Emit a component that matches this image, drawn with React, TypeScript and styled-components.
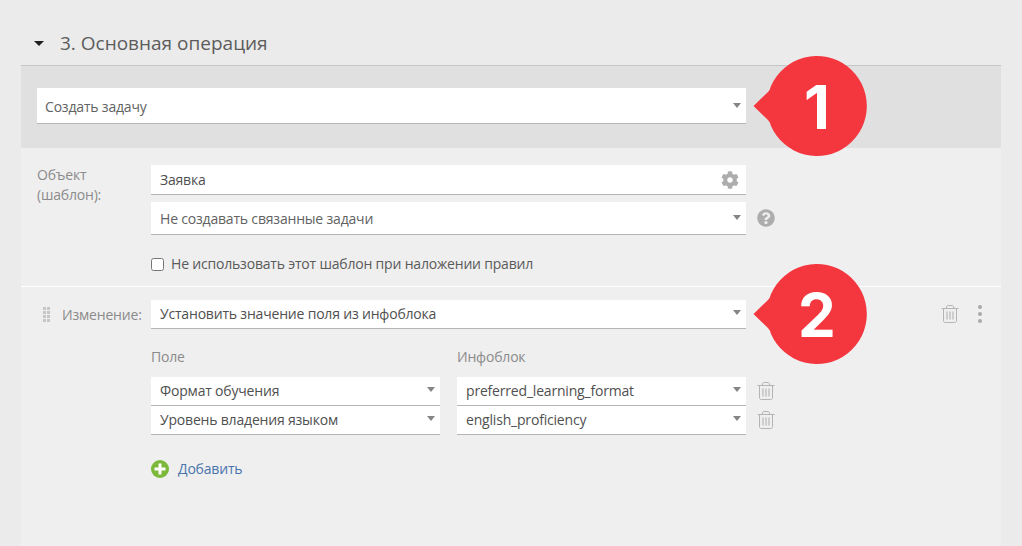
import React from 'react';
import styled, { createGlobalStyle } from 'styled-components';
import { FaCog, FaQuestionCircle } from 'react-icons/fa';

const GlobalStyle = createGlobalStyle`
  html, body {
    margin: 0;
    height: 546px;
    overflow: hidden;
    background: #ebebeb;
    font-family: "Open Sans", "Noto Sans", sans-serif;
  }
  * { box-sizing: border-box; }
`;

const TrashIcon = ({ size = 18 }: { size?: number }) => (
  <svg width={size} height={size} viewBox="0 0 18 18" fill="none" stroke="#b4b4b4" strokeWidth="1">
    <path d="M0.5 3.5h17M5.5 3.5V2C5.5 1 6.2.5 7 .5h4c.8 0 1.5.5 1.5 1.5v1.5" />
    <path d="M2.5 3.5v12.3c0 1 .7 1.7 1.7 1.7h9.6c1 0 1.7-.7 1.7-1.7V3.5" />
    <path d="M6 6.5v8M9 6.5v8M12 6.5v8" strokeWidth="1.6" stroke="#c6c6c6" />
  </svg>
);

const PlusIcon = () => (
  <svg width="18" height="18" viewBox="0 0 18 18">
    <circle cx="9" cy="9" r="9" fill="#7cb83a" />
    <path d="M9 3.5v11M3.5 9h11" stroke="#fff" strokeWidth="3" />
  </svg>
);

const BubbleShape = () => (
  <svg width="114" height="100" viewBox="0 0 114 100">
    <path
      d="M0.5 50 L15 36 Q17 34 18 30 A50 50 0 1 1 18 70 Q17 66 15 64 Z"
      fill="#f4373f"
    />
  </svg>
);

const Callout = ({ top, children }: { top: number; children: React.ReactNode }) => (
  <Bubble $top={top}>
    <BubbleShape />
    <BubbleNumber>{children}</BubbleNumber>
  </Bubble>
);

const Select = ({
  children,
  height = 29,
  lift = 1,
  inset = 9,
  nudge = -1,
}: {
  children: React.ReactNode;
  height?: number;
  lift?: number;
  inset?: number;
  nudge?: number;
}) => (
  <Field $height={height} $inset={inset} $nudge={nudge}>
    <FieldText>{children}</FieldText>
    <Caret $lift={lift} />
  </Field>
);

const App = () => (
  <Page>
    <GlobalStyle />
    <Panel>
      <Header>
        <HeaderCaret />
        <Title>3. Основная операция</Title>
      </Header>
      <TopBand>
        <Select height={36} lift={1} inset={8} nudge={1}>
          <MutedValue>Создать задачу</MutedValue>
        </Select>
      </TopBand>
      <ObjectSection>
        <FormRow>
          <RowLabel>
            Объект
            <br />
            (шаблон):
          </RowLabel>
          <Stack>
            <Field $height={30} $inset={9} $nudge={0}>
              <FieldText>Заявка</FieldText>
              <GearWrap>
                <FaCog size={18} color="#adadad" />
              </GearWrap>
            </Field>
            <HelpRow>
              <Select height={33} lift={1} nudge={0}>
                <MutedValue>Не создавать связанные задачи</MutedValue>
              </Select>
              <HelpIcon>
                <FaQuestionCircle size={18} color="#adadad" />
              </HelpIcon>
            </HelpRow>
            <CheckRow>
              <CheckBox type="checkbox" readOnly />
              <span>Не использовать этот шаблон при наложении правил</span>
            </CheckRow>
          </Stack>
        </FormRow>
      </ObjectSection>
      <ChangeSection>
        <ChangeRow>
          <Grip>
            {Array.from({ length: 8 }).map((_, i) => (
              <GripDot key={i} />
            ))}
          </Grip>
          <ChangeLabel>Изменение:</ChangeLabel>
          <ChangeField>
            <Select>Установить значение поля из инфоблока</Select>
          </ChangeField>
          <RowActions>
            <TrashIcon size={18} />
            <Dots>
              <Dot />
              <Dot />
              <Dot />
            </Dots>
          </RowActions>
        </ChangeRow>
        <MappingBlock>
          <MappingHead>
            <ColumnTitle>Поле</ColumnTitle>
            <ColumnTitle>Инфоблок</ColumnTitle>
          </MappingHead>
          <MappingRow>
            <Select>Формат обучения</Select>
            <Select>preferred_learning_format</Select>
            <RowTrash>
              <TrashIcon size={18} />
            </RowTrash>
          </MappingRow>
          <MappingRow>
            <Select>Уровень владения языком</Select>
            <Select>english_proficiency</Select>
            <RowTrash>
              <TrashIcon size={18} />
            </RowTrash>
          </MappingRow>
          <AddLink>
            <PlusIcon />
            <span>Добавить</span>
          </AddLink>
        </MappingBlock>
      </ChangeSection>
    </Panel>
    <Callout top={56}>1</Callout>
    <Callout top={264}>2</Callout>
  </Page>
);

const Page = styled.div`
  position: relative;
  width: 1022px;
  height: 546px;
  padding: 0 21px;
  overflow: hidden;
  letter-spacing: -0.19px;
`;

const Panel = styled.div`
  width: 980px;
  height: 546px;
  display: flex;
  flex-direction: column;
  background: #efefef;
`;

const Header = styled.div`
  height: 66px;
  flex: none;
  padding: 0 0 0 13px;
  display: flex;
  align-items: flex-start;
  background: #ebebeb;
  border-bottom: 1px solid #c6c6c6;
`;

const HeaderCaret = styled.span`
  width: 0;
  height: 0;
  margin-top: 41px;
  border-left: 5px solid transparent;
  border-right: 5px solid transparent;
  border-top: 5px solid #1f1f1f;
`;

const Title = styled.div`
  margin: 30px 0 0 16px;
  font-size: 19px;
  line-height: 26px;
  letter-spacing: 0;
  color: #5c5c5c;
`;

const TopBand = styled.div`
  height: 82px;
  flex: none;
  padding: 22px 255px 0 16px;
  background: #e0e0e0;
`;

const Field = styled.div<{ $height: number; $inset: number; $nudge: number }>`
  width: 100%;
  min-width: 0;
  height: ${(p) => p.$height}px;
  padding: ${(p) => Math.max(p.$nudge * 2, 0)}px 5px ${(p) => Math.max(-p.$nudge * 2, 0)}px
    ${(p) => p.$inset}px;
  display: flex;
  align-items: center;
  justify-content: space-between;
  background: #fff;
  border-bottom: 1px solid #b5b5b5;
  font-size: 14px;
  color: #505050;
`;

const FieldText = styled.span`
  white-space: nowrap;
`;

const MutedValue = styled.span`
  color: #626262;
`;

const Caret = styled.span<{ $lift: number }>`
  width: 0;
  height: 0;
  transform: translateY(${(p) => -p.$lift}px);
  border-left: 4.5px solid transparent;
  border-right: 4.5px solid transparent;
  border-top: 5px solid #858585;
`;

const GearWrap = styled.span`
  display: flex;
  margin-right: 2px;
`;

const ObjectSection = styled.div`
  height: 139px;
  flex: none;
  padding: 17px 255px 0 16px;
  border-bottom: 1px solid #fff;
`;

const FormRow = styled.div`
  display: flex;
`;

const RowLabel = styled.div`
  width: 114px;
  flex: none;
  font-size: 14px;
  line-height: 20px;
  color: #8b8b8b;
`;

const Stack = styled.div`
  flex: 1;
  display: flex;
  flex-direction: column;
  gap: 7px;
`;

const HelpRow = styled.div`
  position: relative;
`;

const HelpIcon = styled.span`
  position: absolute;
  left: 606px;
  top: 7px;
  display: flex;
`;

const CheckRow = styled.label`
  margin-top: 12px;
  display: flex;
  align-items: center;
  gap: 7px;
  font-size: 14px;
  line-height: 20px;
  color: #5a5a5a;
`;

const CheckBox = styled.input`
  width: 13px;
  height: 13px;
  margin: 0;
`;

const ChangeSection = styled.div`
  flex: 1;
  padding-top: 13px;
`;

const ChangeRow = styled.div`
  position: relative;
  padding: 0 255px 0 22px;
  display: flex;
  align-items: center;
`;

const ChangeField = styled.div`
  flex: 1;
`;

const Grip = styled.div`
  width: 7px;
  flex: none;
  margin-right: 12px;
  display: grid;
  grid-template-columns: repeat(2, 3px);
  gap: 1px;
`;

const GripDot = styled.span`
  width: 3px;
  height: 3px;
  background: #c6c6c6;
`;

const ChangeLabel = styled.div`
  width: 89px;
  flex: none;
  font-size: 14px;
  color: #8b8b8b;
  white-space: nowrap;
`;

const RowActions = styled.div`
  position: absolute;
  left: 920px;
  top: 5px;
  display: flex;
  align-items: center;
  gap: 19px;
`;

const Dots = styled.div`
  display: flex;
  flex-direction: column;
  gap: 3px;
`;

const Dot = styled.span`
  width: 4px;
  height: 4px;
  border-radius: 50%;
  background: #a9a9a9;
`;

const MappingBlock = styled.div`
  padding: 0 255px 0 130px;
`;

const MappingHead = styled.div`
  height: 48px;
  padding-top: 18px;
  display: grid;
  grid-template-columns: 289px 289px;
  gap: 17px;
`;

const ColumnTitle = styled.div`
  font-size: 14px;
  line-height: 20px;
  color: #8b8b8b;
`;

const MappingRow = styled.div`
  position: relative;
  display: grid;
  grid-template-columns: 289px 289px;
  gap: 17px;
`;

const RowTrash = styled.span`
  position: absolute;
  left: 606px;
  top: 5px;
  display: flex;
`;

const AddLink = styled.div`
  margin-top: 24px;
  display: flex;
  align-items: center;
  gap: 9px;
  font-size: 14px;
  color: #4a74ad;
`;

const Bubble = styled.div<{ $top: number }>`
  position: absolute;
  left: 753px;
  top: ${(p) => p.$top}px;
  width: 114px;
  height: 100px;
`;

const BubbleNumber = styled.span`
  position: absolute;
  left: 14px;
  top: 1px;
  width: 100px;
  height: 100px;
  display: flex;
  align-items: center;
  justify-content: center;
  font-family: Inter, sans-serif;
  font-weight: 700;
  font-size: 60px;
  line-height: 1;
  letter-spacing: 0;
  color: #fff;
`;

export default App;
